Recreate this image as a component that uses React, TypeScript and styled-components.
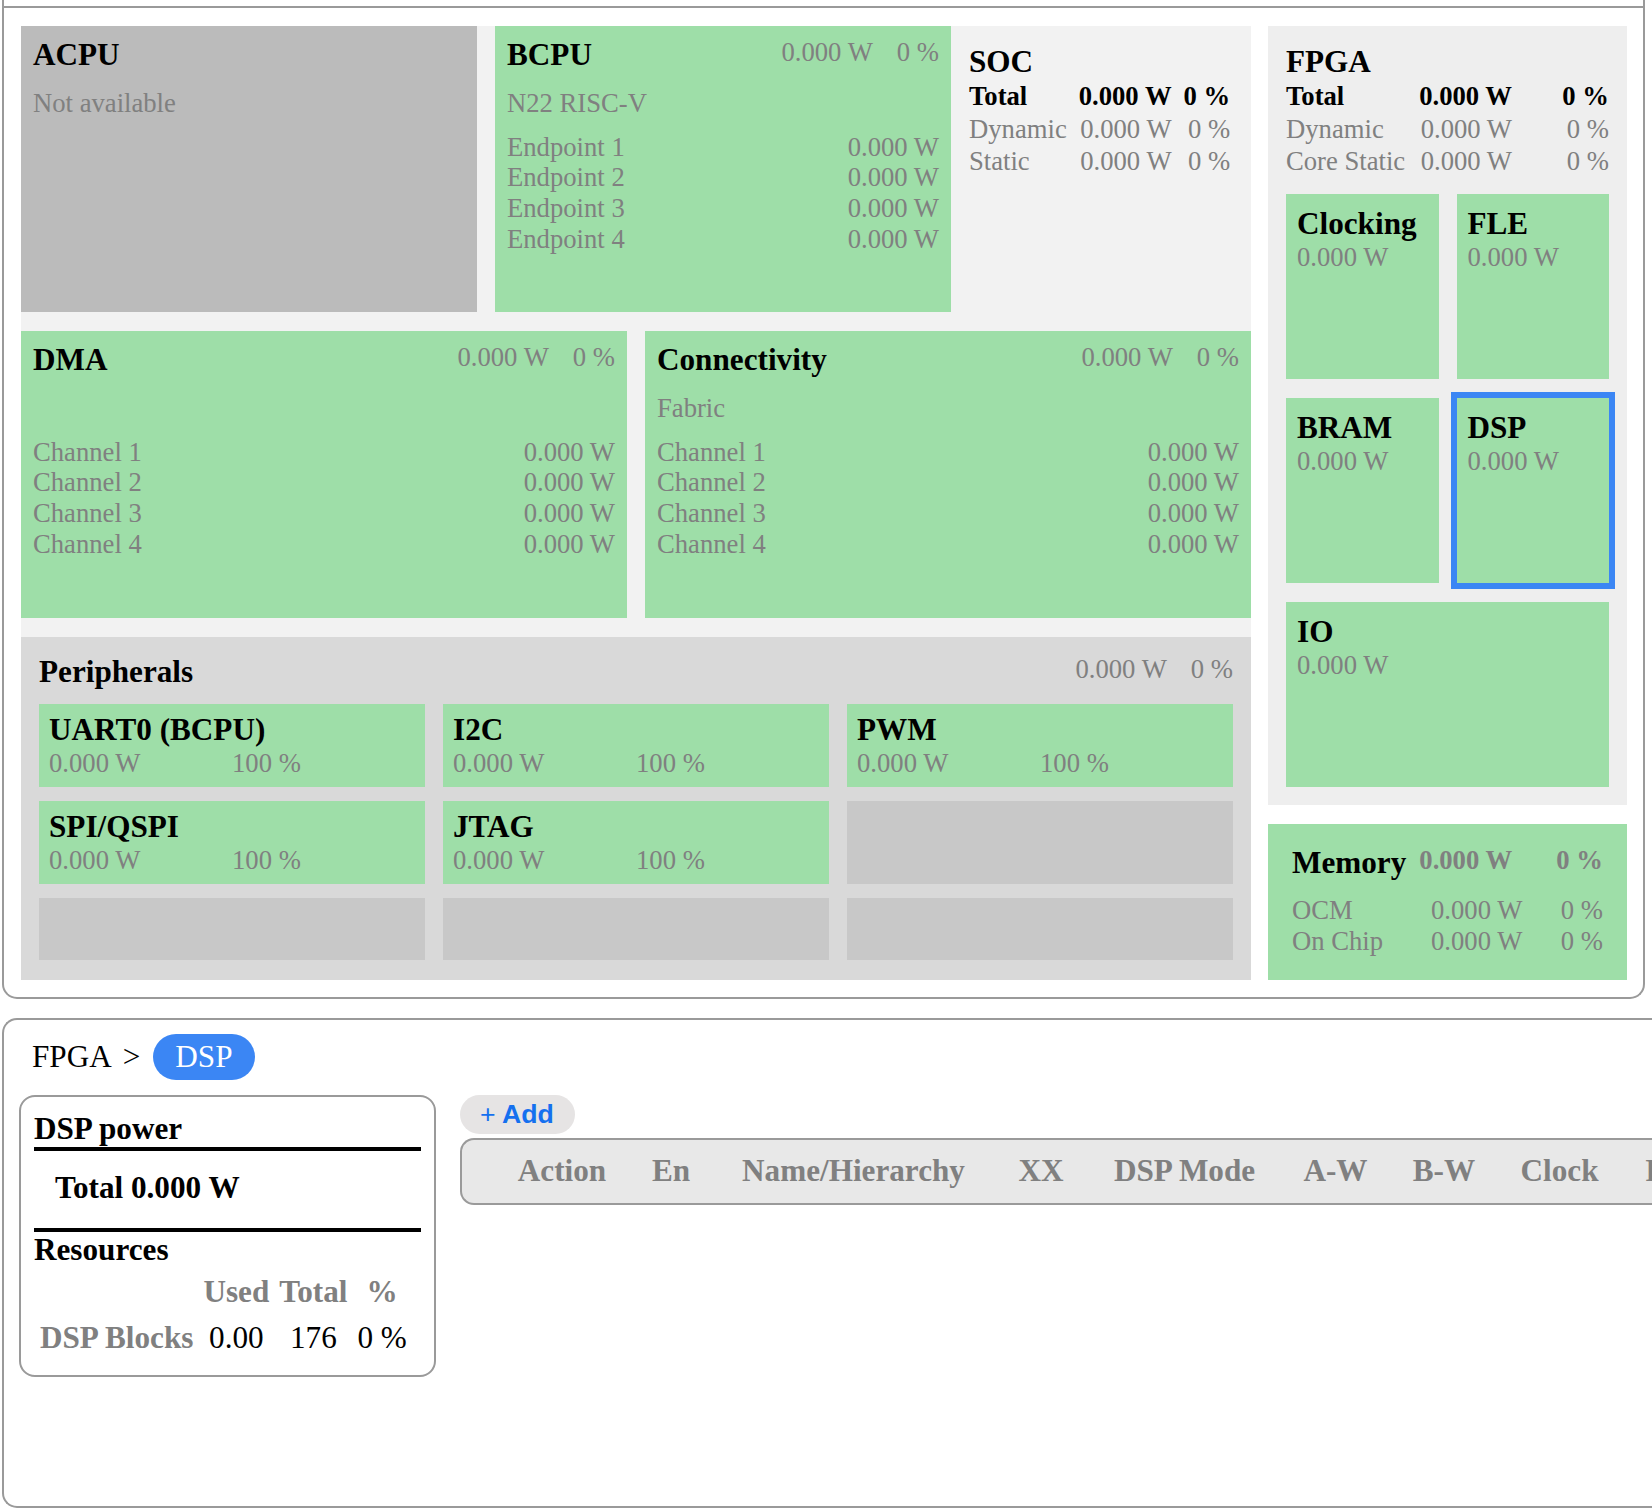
import React from "react";
import styled, { createGlobalStyle } from "styled-components";

const BORDER = "#9a9a9a";
const GREEN = "#9edea8";
const MUTED = "#808080";
const BLUE = "#3b86f4";

const GlobalStyle = createGlobalStyle`
  *, *::before, *::after { box-sizing: border-box; }
  html, body { margin: 0; padding: 0; background: #ffffff; overflow: hidden; }
  body {
    font-family: "Liberation Serif", "Times New Roman", serif;
    font-size: 26.67px;
    line-height: 30.67px;
    color: #000;
  }
`;

const Page = styled.div`
  display: flex;
  flex-direction: column;
  gap: 19px;
  width: 1652px;
  padding-left: 2px;
`;

/* ---------- top panel ---------- */
const TopPanel = styled.section`
  margin-right: 7px;
  border: 2px solid ${BORDER};
  border-top: none;
  border-radius: 0 0 15px 15px;
`;

const TopStrip = styled.div`
  height: 8px;
  border-bottom: 2px solid ${BORDER};
`;

const TopBody = styled.div`
  display: flex;
  gap: 17px;
  padding: 18px 16px 17px 17px;
`;

const SocArea = styled.div`
  flex: none;
  width: 1230px;
  background: #f2f2f2;
  display: flex;
  flex-direction: column;
  gap: 19px;
`;

const SocRow = styled.div<{ $cols: string; $h: number }>`
  display: grid;
  grid-template-columns: ${(p) => p.$cols};
  column-gap: 18px;
  height: ${(p) => p.$h}px;
`;

const Block = styled.div<{ $tone: "green" | "gray" }>`
  background: ${(p) => (p.$tone === "green" ? GREEN : "#bbbbbb")};
  padding: 11px 12px;
  display: flex;
  flex-direction: column;
`;

const BlockHead = styled.div`
  display: flex;
  justify-content: space-between;
  align-items: flex-start;
`;

const Title = styled.div`
  font-size: 31.2px;
  line-height: 36px;
  font-weight: bold;
  white-space: nowrap;
`;

const Stats = styled.div`
  display: flex;
  gap: 24px;
  color: ${MUTED};
  white-space: nowrap;
`;

const Sub = styled.div`
  margin-top: 15px;
  color: ${MUTED};
  min-height: 30.67px;
`;

const List = styled.div`
  margin-top: 13px;
  display: flex;
  flex-direction: column;
`;

const ListRow = styled.div`
  display: flex;
  justify-content: space-between;
  color: ${MUTED};
`;

const Summary = styled.div`
  padding-top: 18px;
`;

const StatGrid = styled.div<{ $cols: string; $gap: number }>`
  display: grid;
  grid-template-columns: ${(p) => p.$cols};
  column-gap: ${(p) => p.$gap}px;
  justify-content: start;
`;

const StatCell = styled.div<{ $strong?: boolean; $align?: "left" | "right" }>`
  padding: 1px 0;
  white-space: nowrap;
  text-align: ${(p) => p.$align || "left"};
  font-weight: ${(p) => (p.$strong ? "bold" : "normal")};
  color: ${(p) => (p.$strong ? "#000" : MUTED)};
`;

const Peripherals = styled.div`
  background: #d9d9d9;
  padding: 17px 18px 20px;
`;

const PeriphHead = styled.div`
  display: flex;
  justify-content: space-between;
  align-items: flex-start;
  margin-bottom: 14px;
`;

const PeriphGrid = styled.div`
  display: grid;
  grid-template-columns: repeat(3, 1fr);
  grid-template-rows: 83px 83px 62px;
  gap: 14px 18px;
`;

const PeriphItem = styled.div`
  background: ${GREEN};
  padding: 8px 10px;
`;

const PeriphValues = styled.div`
  display: grid;
  grid-template-columns: 1fr 1fr;
  color: ${MUTED};
`;

const EmptySlot = styled.div`
  background: #c8c8c8;
`;

/* ---------- FPGA column ---------- */
const RightCol = styled.div`
  flex: none;
  width: 359px;
  display: flex;
  flex-direction: column;
  gap: 19px;
`;

const FpgaPanel = styled.div`
  background: #eeeeee;
  padding: 18px;
`;

const TileGrid = styled.div`
  margin-top: 16px;
  display: grid;
  grid-template-columns: 1fr 1fr;
  grid-auto-rows: 185px;
  gap: 19px 18px;
`;

const Tile = styled.div<{ $selected?: boolean; $wide?: boolean }>`
  background: ${GREEN};
  padding: 12px 11px;
  grid-column: ${(p) => (p.$wide ? "1 / span 2" : "auto")};
  outline: ${(p) => (p.$selected ? `6px solid ${BLUE}` : "none")};
`;

const TileValue = styled.div`
  color: ${MUTED};
`;

const MemoryPanel = styled.div`
  flex: 1;
  background: ${GREEN};
  padding: 21px 24px;
`;

const MemHead = styled.div`
  display: flex;
  align-items: flex-start;
`;

const MemHeadValue = styled.div<{ $push?: boolean }>`
  font-weight: bold;
  color: ${MUTED};
  margin-left: ${(p) => (p.$push ? "auto" : "13px")};
  white-space: nowrap;
`;

const MemRows = styled.div`
  margin-top: 14px;
  display: grid;
  grid-template-columns: 139px auto 1fr;
  color: ${MUTED};
`;

const MemPct = styled.div`
  text-align: right;
`;

/* ---------- bottom panel ---------- */
const BottomPanel = styled.section`
  height: 490px;
  border: 2px solid ${BORDER};
  border-right: none;
  border-radius: 15px 0 0 15px;
  padding: 14px 0 0 15px;
  overflow: hidden;
`;

const Breadcrumb = styled.div`
  display: flex;
  align-items: center;
  margin-left: 13px;
  font-size: 31.2px;
  line-height: 36px;
  height: 46px;
`;

const Crumb = styled.span`
  margin-left: 11px;
`;

const Pill = styled.span`
  margin-left: 13px;
  background: ${BLUE};
  color: #fff;
  border-radius: 23px;
  padding: 5px 22px;
`;

const BottomContent = styled.div`
  margin-top: 15px;
  display: flex;
  align-items: flex-start;
  gap: 24px;
`;

const Card = styled.div`
  flex: none;
  width: 417px;
  border: 2px solid ${BORDER};
  border-radius: 16px;
  padding: 14px 13px 13px;
  font-size: 31.2px;
  line-height: 36px;
`;

const CardTitle = styled.div`
  font-weight: bold;
  border-bottom: 4px solid #000;
`;

const TotalRow = styled.div`
  font-weight: bold;
  padding: 19px 0 22px 21px;
  border-bottom: 4px solid #000;
`;

const ResTitle = styled.div`
  font-weight: bold;
`;

const ResTable = styled.table`
  border-spacing: 2px;
  th, td {
    padding: 4px;
    text-align: center;
    white-space: nowrap;
  }
  th {
    color: ${MUTED};
    font-weight: bold;
  }
  td:first-child {
    color: ${MUTED};
    font-weight: bold;
    text-align: left;
  }
`;

const RightSide = styled.div`
  flex: 1;
  min-width: 0;
  display: flex;
  flex-direction: column;
  align-items: flex-start;
  gap: 4px;
`;

const AddButton = styled.button`
  border: none;
  background: #e6e4e4;
  border-radius: 20px;
  padding: 4px 21px 4px 20px;
  font-family: "Liberation Sans", Arial, sans-serif;
  font-size: 26.67px;
  line-height: 30.67px;
  font-weight: bold;
  color: #1570ef;
`;

const PlusSign = styled.span`
  font-weight: normal;
`;

const HeadRow = styled.div`
  align-self: stretch;
  height: 67px;
  display: flex;
  align-items: center;
  padding-left: 34px;
  background: #e8e8e8;
  border: 2px solid ${BORDER};
  border-right: none;
  border-radius: 14px 0 0 14px;
  overflow: hidden;
  white-space: nowrap;
`;

const HeadCell = styled.div<{ $w: number }>`
  flex: none;
  width: ${(p) => p.$w}px;
  text-align: center;
  font-size: 31.2px;
  line-height: 36px;
  font-weight: bold;
  color: ${MUTED};
`;

/* ---------- data ---------- */
const W = "0.000 W";

const headCols: [string, number][] = [
  ["Action", 132],
  ["En", 86],
  ["Name/Hierarchy", 279],
  ["XX", 96],
  ["DSP Mode", 191],
  ["A-W", 111],
  ["B-W", 106],
  ["Clock", 125],
  ["Power", 132],
];

const periph = ["UART0 (BCPU)", "I2C", "PWM", "SPI/QSPI", "JTAG"];

export default function App() {
  return (
    <>
      <GlobalStyle />
      <Page>
        <TopPanel>
          <TopStrip />
          <TopBody>
            <SocArea>
              <SocRow $cols="456px 456px 1fr" $h={286}>
                <Block $tone="gray">
                  <Title>ACPU</Title>
                  <Sub>Not available</Sub>
                </Block>
                <Block $tone="green">
                  <BlockHead>
                    <Title>BCPU</Title>
                    <Stats>
                      <span>{W}</span>
                      <span>0 %</span>
                    </Stats>
                  </BlockHead>
                  <Sub>N22 RISC-V</Sub>
                  <List>
                    {[1, 2, 3, 4].map((n) => (
                      <ListRow key={n}>
                        <span>Endpoint {n}</span>
                        <span>{W}</span>
                      </ListRow>
                    ))}
                  </List>
                </Block>
                <Summary>
                  <Title>SOC</Title>
                  <StatGrid $cols="auto auto auto" $gap={12}>
                    <StatCell $strong>Total</StatCell>
                    <StatCell $strong $align="right">{W}</StatCell>
                    <StatCell $strong $align="right">0 %</StatCell>
                    <StatCell>Dynamic</StatCell>
                    <StatCell $align="right">{W}</StatCell>
                    <StatCell $align="right">0 %</StatCell>
                    <StatCell>Static</StatCell>
                    <StatCell $align="right">{W}</StatCell>
                    <StatCell $align="right">0 %</StatCell>
                  </StatGrid>
                </Summary>
              </SocRow>

              <SocRow $cols="1fr 1fr" $h={287}>
                {["DMA", "Connectivity"].map((name) => (
                  <Block $tone="green" key={name}>
                    <BlockHead>
                      <Title>{name}</Title>
                      <Stats>
                        <span>{W}</span>
                        <span>0 %</span>
                      </Stats>
                    </BlockHead>
                    <Sub>{name === "Connectivity" ? "Fabric" : "\u00a0"}</Sub>
                    <List>
                      {[1, 2, 3, 4].map((n) => (
                        <ListRow key={n}>
                          <span>Channel {n}</span>
                          <span>{W}</span>
                        </ListRow>
                      ))}
                    </List>
                  </Block>
                ))}
              </SocRow>

              <Peripherals>
                <PeriphHead>
                  <Title>Peripherals</Title>
                  <Stats>
                    <span>{W}</span>
                    <span>0 %</span>
                  </Stats>
                </PeriphHead>
                <PeriphGrid>
                  {periph.map((p) => (
                    <PeriphItem key={p}>
                      <Title>{p}</Title>
                      <PeriphValues>
                        <span>{W}</span>
                        <span>100 %</span>
                      </PeriphValues>
                    </PeriphItem>
                  ))}
                  <EmptySlot />
                  <EmptySlot />
                  <EmptySlot />
                  <EmptySlot />
                </PeriphGrid>
              </Peripherals>
            </SocArea>

            <RightCol>
              <FpgaPanel>
                <Title>FPGA</Title>
                <StatGrid $cols="auto auto 1fr" $gap={14}>
                  <StatCell $strong>Total</StatCell>
                  <StatCell $strong $align="right">{W}</StatCell>
                  <StatCell $strong $align="right">0 %</StatCell>
                  <StatCell>Dynamic</StatCell>
                  <StatCell $align="right">{W}</StatCell>
                  <StatCell $align="right">0 %</StatCell>
                  <StatCell>Core Static</StatCell>
                  <StatCell $align="right">{W}</StatCell>
                  <StatCell $align="right">0 %</StatCell>
                </StatGrid>
                <TileGrid>
                  <Tile>
                    <Title>Clocking</Title>
                    <TileValue>{W}</TileValue>
                  </Tile>
                  <Tile>
                    <Title>FLE</Title>
                    <TileValue>{W}</TileValue>
                  </Tile>
                  <Tile>
                    <Title>BRAM</Title>
                    <TileValue>{W}</TileValue>
                  </Tile>
                  <Tile $selected>
                    <Title>DSP</Title>
                    <TileValue>{W}</TileValue>
                  </Tile>
                  <Tile $wide>
                    <Title>IO</Title>
                    <TileValue>{W}</TileValue>
                  </Tile>
                </TileGrid>
              </FpgaPanel>

              <MemoryPanel>
                <MemHead>
                  <Title>Memory</Title>
                  <MemHeadValue>{W}</MemHeadValue>
                  <MemHeadValue $push>0 %</MemHeadValue>
                </MemHead>
                <MemRows>
                  <span>OCM</span>
                  <span>{W}</span>
                  <MemPct>0 %</MemPct>
                  <span>On Chip</span>
                  <span>{W}</span>
                  <MemPct>0 %</MemPct>
                </MemRows>
              </MemoryPanel>
            </RightCol>
          </TopBody>
        </TopPanel>

        <BottomPanel>
          <Breadcrumb>
            <span>FPGA</span>
            <Crumb>&gt;</Crumb>
            <Pill>DSP</Pill>
          </Breadcrumb>
          <BottomContent>
            <Card>
              <CardTitle>DSP power</CardTitle>
              <TotalRow>Total 0.000 W</TotalRow>
              <ResTitle>Resources</ResTitle>
              <ResTable>
                <thead>
                  <tr>
                    <th></th>
                    <th>Used</th>
                    <th>Total</th>
                    <th>%</th>
                  </tr>
                </thead>
                <tbody>
                  <tr>
                    <td>DSP Blocks</td>
                    <td>0.00</td>
                    <td>176</td>
                    <td>0 %</td>
                  </tr>
                </tbody>
              </ResTable>
            </Card>
            <RightSide>
              <AddButton>
                <PlusSign>+</PlusSign> Add
              </AddButton>
              <HeadRow>
                {headCols.map(([label, w]) => (
                  <HeadCell key={label} $w={w}>
                    {label}
                  </HeadCell>
                ))}
              </HeadRow>
            </RightSide>
          </BottomContent>
        </BottomPanel>
      </Page>
    </>
  );
}
